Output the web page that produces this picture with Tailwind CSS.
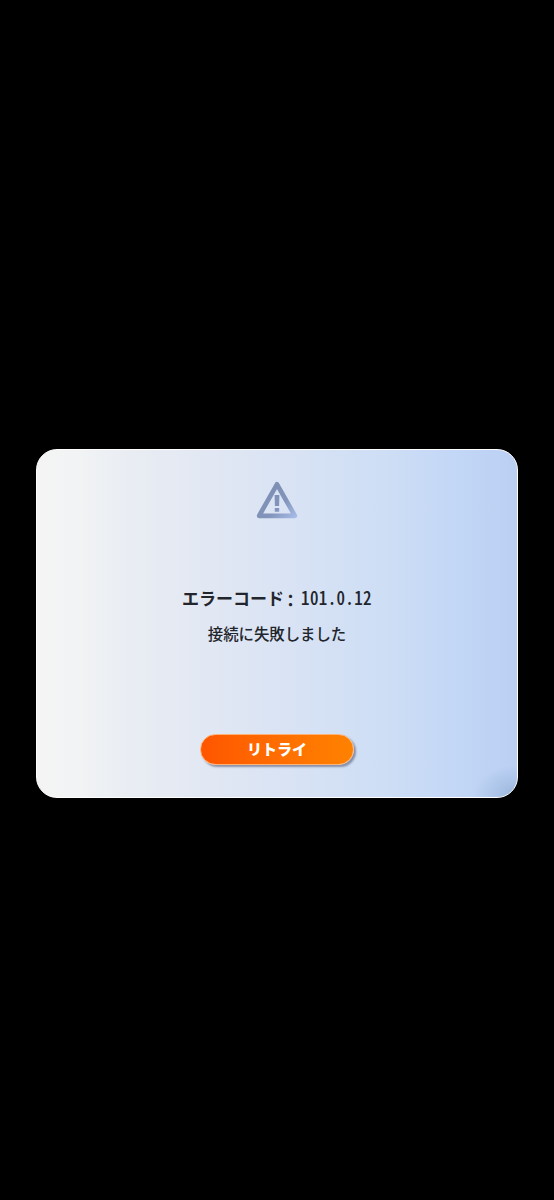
<!DOCTYPE html>
<html lang="ja">
<head>
<meta charset="utf-8">
<title>エラー</title>
<script src="https://cdn.jsdelivr.net/npm/@tailwindcss/browser@4"></script>
</head>
<body class="bg-black h-[1200px] overflow-hidden pt-[448.5px] font-['Noto_Sans_CJK_JP',sans-serif] text-[#22252b]">
<main class="relative mx-auto w-[482px] h-[349px] overflow-hidden rounded-[21px] border border-white bg-[linear-gradient(90deg,#f4f4f4_0%,#f1f3f4_9%,#e9edf3_19%,#e2e8f3_35%,#d9e3f4_52%,#cedef5_72%,#c3d7f6_87%,#bad0f3_100%)] flex flex-col items-center">
  <div class="absolute right-0 bottom-0 w-[44px] h-[32px] bg-[radial-gradient(44px_32px_at_100%_100%,rgba(125,155,198,0.55)_0%,rgba(140,170,210,0.38)_45%,rgba(150,180,220,0)_100%)]"></div>
  <svg class="mt-[31.5px] w-[42px] h-[38px] shrink-0" viewBox="0 0 42 38" fill="none">
    <defs>
      <linearGradient id="g" gradientUnits="userSpaceOnUse" x1="12" y1="8" x2="40" y2="38">
        <stop offset="0" stop-color="#7e8fb4"/><stop offset=".5" stop-color="#8294bb"/><stop offset="1" stop-color="#a9bfeb"/>
      </linearGradient>
    </defs>
    <path d="M21 3.3 38.9 34.8H3.1Z" stroke="url(#g)" stroke-width="4.7" stroke-linejoin="round"/>
    <path d="M18.6 14h4.8l-.3 11h-4.2ZM18.8 27h4.4v3.8h-4.4Z" fill="url(#g)"/>
  </svg>
  <h1 class="mt-[67px] h-6 leading-6 text-[17px] font-bold whitespace-nowrap flex"><span>エラーコード</span><span class="relative -left-0.5 top-[2px] w-[17px] text-center">：</span><span class="font-medium tracking-[0.35px] origin-[50%_75%] scale-y-[1.08] [font-feature-settings:'hwid']">101.0.12</span></h1>
  <p class="mt-[11px] h-6 leading-6 text-[15.4px] font-medium whitespace-nowrap">接続に失敗しました</p>
  <button class="mt-[89px] w-[154px] h-[31px] shrink-0 rounded-full border-[1.5px] border-[#ffb273] bg-linear-to-r from-[#ff5500] to-[#ff8200] shadow-[2px_2px_2px_rgba(85,90,115,0.6)] flex items-center justify-center pb-0.5 text-[15px] leading-none font-black text-white">リトライ</button>
</main>
</body>
</html>
